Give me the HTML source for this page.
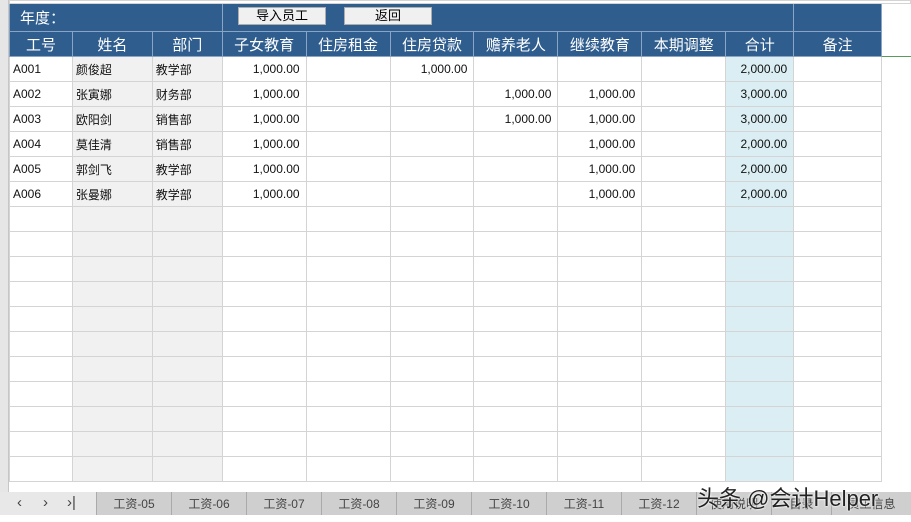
<!DOCTYPE html>
<html><head><meta charset="utf-8"><style>
body{margin:0;width:911px;height:522px;overflow:hidden;background:#fff;position:relative;font-family:"Liberation Sans","Noto Sans CJK SC",sans-serif;}
#rh{position:absolute;left:0;top:0;width:9px;height:492px;background:#e6e6e6;border-right:1px solid #c6c6c6;box-sizing:border-box}
table{position:absolute;left:9px;top:0;border-collapse:collapse;table-layout:fixed}
td{border:1px solid #d4d4d4;padding:0 3px;font-size:12px;height:24px;white-space:nowrap;overflow:hidden;color:#111}
td.n{text-align:right;padding-right:6px}
td.g{background:#f1f1f1}
td.j{background:#daeef3}
tr.h td{background:#2f5d8e;color:#fff;font-size:15px;text-align:center;border-color:#8aa5c4}
tr.t td{background:#2f5d8e;color:#fff;font-size:15px;border-color:#8aa5c4;height:27px}
.btn{position:absolute;top:7px;height:18px;width:88px;background:#f0f0f0;border:1px solid #adadad;box-sizing:border-box;font-size:13px;text-align:center;line-height:16px;color:#000}
#tabs{position:absolute;left:0;top:492px;width:911px;height:23px;background:#e8e8e8}
.tab{position:absolute;top:0;height:23px;width:75px;background:#cfcfcf;border-left:1px solid #aaa;box-sizing:border-box;font-size:12px;color:#444;text-align:center;line-height:24px}
.nav{position:absolute;top:2px;font-size:15px;color:#444}
#wm{position:absolute;left:697px;top:481px;font-size:22px;color:#222;text-shadow:0 0 2px #fff,0 0 2px #fff}
</style></head><body>
<div id="rh"></div>
<table>
<colgroup><col style="width:63px"><col style="width:80px"><col style="width:70px"><col style="width:84px"><col style="width:84px"><col style="width:84px"><col style="width:84px"><col style="width:84px"><col style="width:84px"><col style="width:68px"><col style="width:88px"><col style="width:29px"></colgroup>
<tr><td style="height:2px;padding:0" colspan="12"></td></tr>
<tr class="t"><td colspan="3" style="padding-left:10px">年度：</td><td colspan="7"></td><td></td><td style="background:#fff;border:none"></td></tr>
<tr class="h"><td>工号</td><td>姓名</td><td>部门</td><td>子女教育</td><td>住房租金</td><td>住房贷款</td><td>赡养老人</td><td>继续教育</td><td>本期调整</td><td>合计</td><td>备注</td><td style="background:#fff;border:none;border-bottom:1px solid #5a9a5a"></td></tr>
<tr><td>A001</td><td class="g">颜俊超</td><td class="g">教学部</td><td class="n">1,000.00</td><td></td><td class="n">1,000.00</td><td></td><td></td><td></td><td class="n j">2,000.00</td><td></td><td style="border:none"></td></tr>
<tr><td>A002</td><td class="g">张寅娜</td><td class="g">财务部</td><td class="n">1,000.00</td><td></td><td></td><td class="n">1,000.00</td><td class="n">1,000.00</td><td></td><td class="n j">3,000.00</td><td></td><td style="border:none"></td></tr>
<tr><td>A003</td><td class="g">欧阳剑</td><td class="g">销售部</td><td class="n">1,000.00</td><td></td><td></td><td class="n">1,000.00</td><td class="n">1,000.00</td><td></td><td class="n j">3,000.00</td><td></td><td style="border:none"></td></tr>
<tr><td>A004</td><td class="g">莫佳清</td><td class="g">销售部</td><td class="n">1,000.00</td><td></td><td></td><td></td><td class="n">1,000.00</td><td></td><td class="n j">2,000.00</td><td></td><td style="border:none"></td></tr>
<tr><td>A005</td><td class="g">郭剑飞</td><td class="g">教学部</td><td class="n">1,000.00</td><td></td><td></td><td></td><td class="n">1,000.00</td><td></td><td class="n j">2,000.00</td><td></td><td style="border:none"></td></tr>
<tr><td>A006</td><td class="g">张曼娜</td><td class="g">教学部</td><td class="n">1,000.00</td><td></td><td></td><td></td><td class="n">1,000.00</td><td></td><td class="n j">2,000.00</td><td></td><td style="border:none"></td></tr>
<tr><td></td><td class="g"></td><td class="g"></td><td></td><td></td><td></td><td></td><td></td><td></td><td class="j"></td><td></td><td style="border:none"></td></tr>
<tr><td></td><td class="g"></td><td class="g"></td><td></td><td></td><td></td><td></td><td></td><td></td><td class="j"></td><td></td><td style="border:none"></td></tr>
<tr><td></td><td class="g"></td><td class="g"></td><td></td><td></td><td></td><td></td><td></td><td></td><td class="j"></td><td></td><td style="border:none"></td></tr>
<tr><td></td><td class="g"></td><td class="g"></td><td></td><td></td><td></td><td></td><td></td><td></td><td class="j"></td><td></td><td style="border:none"></td></tr>
<tr><td></td><td class="g"></td><td class="g"></td><td></td><td></td><td></td><td></td><td></td><td></td><td class="j"></td><td></td><td style="border:none"></td></tr>
<tr><td></td><td class="g"></td><td class="g"></td><td></td><td></td><td></td><td></td><td></td><td></td><td class="j"></td><td></td><td style="border:none"></td></tr>
<tr><td></td><td class="g"></td><td class="g"></td><td></td><td></td><td></td><td></td><td></td><td></td><td class="j"></td><td></td><td style="border:none"></td></tr>
<tr><td></td><td class="g"></td><td class="g"></td><td></td><td></td><td></td><td></td><td></td><td></td><td class="j"></td><td></td><td style="border:none"></td></tr>
<tr><td></td><td class="g"></td><td class="g"></td><td></td><td></td><td></td><td></td><td></td><td></td><td class="j"></td><td></td><td style="border:none"></td></tr>
<tr><td></td><td class="g"></td><td class="g"></td><td></td><td></td><td></td><td></td><td></td><td></td><td class="j"></td><td></td><td style="border:none"></td></tr>
<tr><td></td><td class="g"></td><td class="g"></td><td></td><td></td><td></td><td></td><td></td><td></td><td class="j"></td><td></td><td style="border:none"></td></tr>
</table>
<div class="btn" style="left:238px">导入员工</div>
<div class="btn" style="left:344px">返回</div>
<div id="tabs">
<span class="nav" style="left:17px">&lsaquo;</span><span class="nav" style="left:43px">&rsaquo;</span><span class="nav" style="left:67px">&rsaquo;|</span>
<div class="tab" style="left:96px">工资-05</div>
<div class="tab" style="left:171px">工资-06</div>
<div class="tab" style="left:246px">工资-07</div>
<div class="tab" style="left:321px">工资-08</div>
<div class="tab" style="left:396px">工资-09</div>
<div class="tab" style="left:471px">工资-10</div>
<div class="tab" style="left:546px">工资-11</div>
<div class="tab" style="left:621px">工资-12</div>
<div class="tab" style="left:696px">使用说明</div>
<div class="tab" style="left:771px;width:60px">目录</div>
<div class="tab" style="left:831px;width:80px">员工信息</div>
</div>
<div id="wm">头条 @会计Helper</div>
</body></html>
